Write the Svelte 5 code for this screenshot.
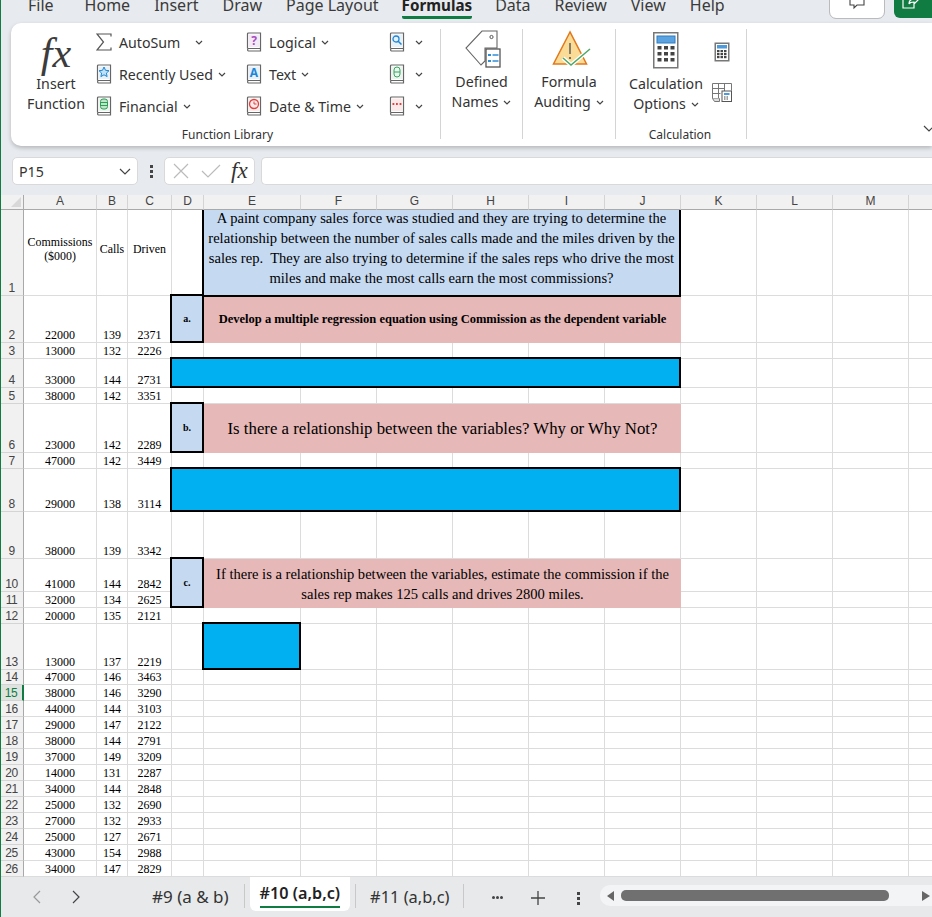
<script>
  const tabs = ['File', 'Home', 'Insert', 'Draw', 'Page Layout', 'Formulas', 'Data', 'Review', 'View', 'Help'];
  const columns = ['A', 'B', 'C', 'D', 'E', 'F', 'G', 'H', 'I', 'J', 'K', 'L', 'M', 'N'];

  const data = [
    [22000, 139, 2371], [13000, 132, 2226], [33000, 144, 2731], [38000, 142, 3351],
    [23000, 142, 2289], [47000, 142, 3449], [29000, 138, 3114], [38000, 139, 3342],
    [41000, 144, 2842], [32000, 134, 2625], [20000, 135, 2121], [13000, 137, 2219],
    [47000, 146, 3463], [38000, 146, 3290], [44000, 144, 3103], [29000, 147, 2122],
    [38000, 144, 2791], [37000, 149, 3209], [14000, 131, 2287], [34000, 144, 2848],
    [25000, 132, 2690], [27000, 132, 2933], [25000, 127, 2671], [43000, 154, 2988],
    [34000, 147, 2829]
  ];

  const blanks = (n) => Array(n).fill({ kind: 'blank' });

  // what sits in columns D onward, keyed by row number
  const merged = {
    2: [
      { kind: 'tag', text: 'a.' },
      { kind: 'pink small', span: 6, lines: ['Develop a multiple regression equation using Commission as the dependent variable'] },
      ...blanks(4)
    ],
    4: [{ kind: 'answer', span: 7 }, ...blanks(4)],
    6: [
      { kind: 'tag', text: 'b.' },
      { kind: 'pink large', span: 6, lines: ['Is there a relationship between the variables? Why or Why Not?'] },
      ...blanks(4)
    ],
    8: [{ kind: 'answer', span: 7 }, ...blanks(4)],
    10: [
      { kind: 'tag', text: 'c.', rows: 2 },
      {
        kind: 'pink medium',
        span: 6,
        rows: 2,
        lines: ['If there is a relationship between the variables, estimate the commission if the', 'sales rep makes 125 calls and drives 2800 miles.']
      },
      ...blanks(4)
    ],
    11: blanks(4),
    13: [{ kind: 'blank' }, { kind: 'answer' }, ...blanks(9)]
  };

  const intro = [
    'A paint company sales force was studied and they are trying to determine the',
    'relationship between the number of sales calls made and the miles driven by the',
    'sales rep.  They are also trying to determine if the sales reps who drive the most',
    'miles and make the most calls earn the most commissions?'
  ];

  const row = (i) => merged[i + 2] ?? blanks(11);
  const place = (c) => `grid-column: span ${c.span ?? 1}; grid-row: span ${c.rows ?? 1}`;
</script>

{#snippet chevron()}
  <svg class="chev" width="8" height="5" viewBox="0 0 8 5"><path d="M1 1l3 3 3-3" fill="none" stroke="#444" stroke-width="1.2" /></svg>
{/snippet}

{#snippet book(color)}
  <svg class="book" width="16" height="20" viewBox="0 0 16 20">
    <path d="M1.5 16.5V2a1 1 0 0 1 1-1h12v15.500H2.500a1.300 1.300 0 0 0 0 2.500h12v-2.500" fill="#fff" stroke="#666" stroke-width="1.200" />
    <rect x="3" y="2.500" width="10" height="12.500" fill={color} opacity=".12" />
  </svg>
{/snippet}

<div class="window">
  <header class="tabs">
    <nav>
      {#each tabs as t}
        <span class="tab" class:on={t === 'Formulas'}>{t}</span>
      {/each}
    </nav>
    <div class="top-actions">
      <button class="comment" aria-label="Comments">
        <svg width="16" height="12" viewBox="0 0 16 12"><path d="M1 -4h14V5H8l-3 3V5H1z" fill="none" stroke="#444" stroke-width="1.100" /></svg>
      </button>
      <button class="share" aria-label="Share">
        <svg width="18" height="16" viewBox="0 0 18 16"><path d="M2 5v8h11V9M8 9c0-3 2-5 5-5V1l4 4-4 4V7c-2 0-4 0-5 2z" fill="none" stroke="#fff" stroke-width="1.200" /></svg>
      </button>
    </div>
  </header>

  <section class="ribbon">
    <div class="group library">
      <div class="group-body">
        <div class="big insert">
          <span class="fx-big">fx</span>
          <span>Insert</span>
          <span>Function</span>
        </div>
        <div class="stack col2">
          <div class="item">
            <svg class="icon" width="16" height="18" viewBox="0 0 16 18"><path d="M15 3.500V1H1l6.500 8L1 17h14v-2.500" fill="none" stroke="#555" stroke-width="1.200" /></svg>
            <span>AutoSum</span><span class="gap"></span>{@render chevron()}
          </div>
          <div class="item">
            <span class="icon-wrap">
              {@render book('#2f8fd8')}
              <svg class="glyph" width="12" height="12" viewBox="0 0 12 12"><path d="M6 1l1.500 3.300 3.500.4-2.600 2.400.7 3.500L6 8.800 2.900 10.600l.7-3.500L1 4.700l3.500-.4z" fill="#bfe0f7" stroke="#1f86d6" /></svg>
            </span>
            <span>Recently Used</span>{@render chevron()}
          </div>
          <div class="item">
            <span class="icon-wrap">
              {@render book('#4caf6d')}
              <svg class="glyph" width="12" height="12" viewBox="0 0 12 12"><rect x="2.500" y="1" width="7" height="10" rx="2.500" fill="#bfe6c8" stroke="#2e9e57" /><path d="M2.500 4.500h7M2.500 7.500h7" stroke="#2e9e57" /></svg>
            </span>
            <span>Financial</span>{@render chevron()}
          </div>
        </div>
        <div class="stack col3">
          <div class="item">
            <span class="icon-wrap">
              {@render book('#a64fc0')}
              <span class="glyph letter purple">?</span>
            </span>
            <span>Logical</span>{@render chevron()}
          </div>
          <div class="item">
            <span class="icon-wrap">
              {@render book('#2f8fd8')}
              <span class="glyph letter blue">A</span>
            </span>
            <span>Text</span>{@render chevron()}
          </div>
          <div class="item">
            <span class="icon-wrap">
              {@render book('#e34b4b')}
              <svg class="glyph" width="12" height="12" viewBox="0 0 12 12"><circle cx="6" cy="6" r="4.500" fill="none" stroke="#e0403f" stroke-width="1.300" /><path d="M6 3.500V6h2.500" fill="none" stroke="#e0403f" /></svg>
            </span>
            <span>Date &amp; Time</span>{@render chevron()}
          </div>
        </div>
        <div class="stack col4">
          <div class="item">
            <span class="icon-wrap">
              {@render book('#2f8fd8')}
              <svg class="glyph" width="12" height="12" viewBox="0 0 12 12"><circle cx="5" cy="5" r="3" fill="none" stroke="#1f86d6" stroke-width="1.300" /><path d="M7.200 7.200L10.500 10.500" stroke="#1f86d6" stroke-width="1.500" /></svg>
            </span>
            {@render chevron()}
          </div>
          <div class="item">
            <span class="icon-wrap">
              {@render book('#4caf6d')}
              <svg class="glyph" width="12" height="12" viewBox="0 0 12 12"><rect x="3" y="1" width="6" height="10" rx="3" fill="none" stroke="#3aa564" /><path d="M3 6h6" stroke="#3aa564" /></svg>
            </span>
            {@render chevron()}
          </div>
          <div class="item">
            <span class="icon-wrap">
              {@render book('#e34b4b')}
              <svg class="glyph" width="12" height="12" viewBox="0 0 12 12"><path d="M1.500 6h1.800M5 6h1.800M8.600 6h1.800" stroke="#e0403f" stroke-width="1.800" /></svg>
            </span>
            {@render chevron()}
          </div>
        </div>
      </div>
      <div class="group-label">Function Library</div>
    </div>

    <div class="group names">
      <div class="group-body">
        <div class="big tall">
          <svg class="big-icon" width="38" height="40" viewBox="0 0 38 40">
            <path d="M32 1H17L1 18l15 17 4-4V18h12z" fill="#fff" stroke="#666" stroke-width="1.100" />
            <circle cx="26.500" cy="7" r="1.600" fill="none" stroke="#555" />
            <rect x="21" y="19" width="14" height="18" fill="#fff" stroke="#555" stroke-width="1.300" />
            <path d="M23 24h3v2h-3zM23 30h3v2h-3z" fill="#2f8fd8" />
            <path d="M27.500 25h6M27.500 31h6" stroke="#2f8fd8" stroke-width="1.400" />
          </svg>
          <span>Defined</span>
          <span class="line">Names{@render chevron()}</span>
        </div>
      </div>
    </div>

    <div class="group auditing">
      <div class="group-body">
        <div class="big tall">
          <svg class="big-icon" width="40" height="40" viewBox="0 0 40 40">
            <path d="M18 2L1.500 34h33z" fill="#fbdc97" stroke="#e2781c" stroke-width="1.500" />
            <path d="M18 13v11" stroke="#555" stroke-width="1.400" />
            <circle cx="18" cy="28" r="1.100" fill="#555" />
            <path d="M11 28l8 7L38 19" fill="none" stroke="#fff" stroke-width="4" />
            <path d="M11 28l8 7L38 19" fill="none" stroke="#4da866" stroke-width="1.500" />
          </svg>
          <span>Formula</span>
          <span class="line">Auditing{@render chevron()}</span>
        </div>
      </div>
    </div>

    <div class="group calculation">
      <div class="group-body">
        <div class="big calc">
          <svg class="big-icon" width="26" height="38" viewBox="0 0 26 38">
            <rect x=".75" y=".75" width="24" height="35" fill="#fff" stroke="#777" stroke-width="1.500" />
            <rect x="4" y="4" width="18" height="7" fill="#5ba3e0" stroke="#2f7cc0" />
            {#each [14, 20, 26] as y}
              {#each [4.500, 11, 17.500] as x}
                <rect {x} {y} width="4" height="3.500" fill="#444" />
              {/each}
            {/each}
          </svg>
          <span>Calculation</span>
          <span class="line">Options{@render chevron()}</span>
        </div>
        <div class="small-calcs">
          <svg width="16" height="20" viewBox="0 0 16 20">
            <rect x=".5" y=".5" width="15" height="19" fill="#777" />
            <rect x="2" y="2" width="12" height="16" fill="#fff" />
            <rect x="3" y="3" width="10" height="3.500" fill="#4d9ada" />
            {#each [8, 11, 14] as y}
              {#each [3, 6.500, 10] as x}
                <rect {x} {y} width="2.500" height="2.200" fill="#444" />
              {/each}
            {/each}
          </svg>
          <svg width="20" height="19" viewBox="0 0 20 19">
            <path d="M.5.500h19v7M.5.500v15h7M.5 5.500h12M.5 10.500h8M6.500.500v15M12.500.500v8" fill="none" stroke="#777" />
            <path d="M.5 15.500l2 3h5v-3" fill="#ddd" stroke="#777" />
            <rect x="10" y="8" width="9.500" height="10.500" fill="#fff" stroke="#555" />
            <rect x="12" y="10" width="5.500" height="2" fill="#4d9ada" />
            <path d="M12 14h1.500M14.500 14H16M12 16h1.500M14.500 16H16" stroke="#444" />
          </svg>
        </div>
      </div>
      <div class="group-label">Calculation</div>
    </div>

    <svg class="collapse" width="12" height="8" viewBox="0 0 12 8"><path d="M1 1l5 5 5-5" fill="none" stroke="#444" stroke-width="1.200" /></svg>
  </section>

  <section class="formula">
    <div class="namebox">
      <span>P15</span>
      <svg width="12" height="7" viewBox="0 0 12 7"><path d="M1 1l5 5 5-5" fill="none" stroke="#444" stroke-width="1.200" /></svg>
    </div>
    <div class="kebab"><i></i><i></i><i></i></div>
    <div class="fxbox">
      <svg width="16" height="16" viewBox="0 0 16 16"><path d="M1 1l14 14M15 1L1 15" stroke="#bbb" stroke-width="1.200" /></svg>
      <svg width="20" height="14" viewBox="0 0 20 14"><path d="M1 7l6 6L19 1" fill="none" stroke="#bbb" stroke-width="1.200" /></svg>
      <span class="fx-small">fx</span>
    </div>
    <div class="input"></div>
  </section>

  <section class="sheet">
    <div class="corner"><svg width="10" height="10" viewBox="0 0 10 10"><path d="M10 0v10H0z" fill="#d8d8d8" /></svg></div>
    {#each columns as c}
      <div class="colhead">{c}</div>
    {/each}

    <div class="rowhead">1</div>
    <div class="cell headcell center"><span>Commissions<br />($000)</span></div>
    <div class="cell headcell center"><span>Calls</span></div>
    <div class="cell headcell center"><span>Driven</span></div>
    <div class="cell"></div>
    <div class="intro">
      {#each intro as line}<div>{line}</div>{/each}
    </div>
    {#each blanks(4) as _}<div class="cell"></div>{/each}

    {#each data as d, i}
      <div class="rowhead" class:current={i + 2 === 15}>{i + 2}</div>
      {#each d as v}
        <div class="cell num">{v}</div>
      {/each}
      {#each row(i) as c}
        {#if c.kind === 'blank'}
          <div class="cell"></div>
        {:else if c.kind === 'tag'}
          <div class="tag" style={place(c)}>{c.text}</div>
        {:else if c.kind === 'answer'}
          <div class="answer" style={place(c)}></div>
        {:else}
          <div class={c.kind} style={place(c)}>
            {#each c.lines as line}<div>{line}</div>{/each}
          </div>
        {/if}
      {/each}
    {/each}
  </section>

  <footer class="sheetbar">
    <svg class="nav prev" width="9" height="14" viewBox="0 0 9 14"><path d="M8 1L2 7l6 6" fill="none" stroke="#999" stroke-width="1.200" /></svg>
    <svg class="nav next" width="9" height="14" viewBox="0 0 9 14"><path d="M1 1l6 6-6 6" fill="none" stroke="#444" stroke-width="1.200" /></svg>
    <span class="sheet-tab first">#9 (a &amp; b)</span>
    <i class="sep"></i>
    <span class="sheet-tab active">#10 (a,b,c)</span>
    <i class="sep"></i>
    <span class="sheet-tab last">#11 (a,b,c)</span>
    <i class="sep"></i>
    <span class="more"><i></i><i></i><i></i></span>
    <svg class="plus" width="14" height="14" viewBox="0 0 14 14"><path d="M7 0v14M0 7h14" stroke="#444" stroke-width="1.300" /></svg>
    <div class="kebab tiny"><i></i><i></i><i></i></div>
    <div class="scroll">
      <svg width="8" height="10" viewBox="0 0 8 10"><path d="M7 0v10L0 5z" fill="#666" /></svg>
      <div class="thumb"></div>
      <svg width="8" height="10" viewBox="0 0 8 10"><path d="M0 0v10l8-5z" fill="#666" /></svg>
    </div>
  </footer>
</div>

<style>
  :global(body) {
    margin: 0;
    background: #e7eaee;
  }

  .window {
    width: 931px;
    height: 917px;
    overflow: hidden;
    display: flex;
    flex-direction: column;
    border-left: 1px solid #107c41;
    background: #e7eaee;
    font-family: "Noto Sans", "Open Sans", sans-serif;
    font-size: 14.200px;
    color: #333;
  }

  .tabs {
    height: 23px;
    flex: none;
    display: flex;
    justify-content: space-between;
  }

  .tabs nav {
    display: flex;
    gap: 24px;
    padding-left: 27px;
    height: 20px;
    margin-top: -1px;
  }

  .tab {
    font-size: 16px;
    line-height: 12px;
    color: #3a3a3a;
    height: 20px;
    box-sizing: border-box;
  }

  .tab:first-child {
    margin-right: 7px;
  }

  .tab.on {
    font-size: 15.200px;
    font-weight: 700;
    color: #222;
    margin-left: -1px;
    margin-right: -1px;
    border-bottom: 3px solid #107c41;
    border-radius: 0 0 2px 2px;
  }

  .top-actions {
    display: flex;
    gap: 10px;
    margin-right: -1px;
  }

  .top-actions button {
    padding: 0;
    border: 0;
    height: 18px;
    display: flex;
    justify-content: center;
    overflow: hidden;
  }

  .comment {
    width: 54px;
    background: #fff;
    outline: 1px solid #bbb;
    border-radius: 0 0 6px 6px;
  }

  .share {
    width: 39px;
    background: #107c41;
    border-radius: 0 0 0 6px;
  }

  .share svg {
    margin-top: -5px;
    margin-right: 8px;
    flex: none;
  }

  .ribbon {
    position: relative;
    height: 123px;
    flex: none;
    margin-left: 10px;
    display: flex;
    background: #fff;
    border-radius: 10px 0 0 10px;
    box-shadow: 0 2px 4px rgba(0, 0, 0, 0.22);
  }

  .collapse {
    position: absolute;
    right: -3px;
    top: 102px;
  }

  .group {
    box-sizing: border-box;
    display: flex;
    flex-direction: column;
    height: 110px;
    margin-top: 6px;
    border-right: 1px solid #d4d4d4;
    position: relative;
  }

  .group-body {
    display: flex;
    flex: 1;
    min-height: 0;
  }

  .group-label {
    font-size: 12px;
    line-height: 16px;
    text-align: center;
    color: #333;
    margin-bottom: -4px;
  }

  .library {
    width: 430px;
  }

  .library .group-label {
    padding-left: 4px;
  }

  .names {
    width: 82px;
  }

  .auditing {
    width: 93px;
  }

  .calculation {
    width: 131px;
  }

  .calculation .group-label {
    padding-right: 2px;
  }

  .big {
    display: flex;
    flex-direction: column;
    align-items: center;
    line-height: 20px;
    white-space: nowrap;
  }

  .insert {
    width: 74px;
    margin-left: 8px;
    flex: none;
  }

  .fx-big {
    font: italic 42px/42px "Liberation Serif", serif;
    height: 42px;
    margin-top: 3px;
    color: #3c3c3c;
  }

  .tall {
    width: 100%;
  }

  .big-icon {
    display: block;
    height: 40px;
    margin: 1px 0 2px;
    flex: none;
  }

  .names .big-icon {
    margin-left: 4px;
  }

  .auditing .big-icon {
    margin-left: 6px;
  }

  .calc {
    width: 100px;
  }

  .calc .big-icon {
    height: 38px;
    margin: 3px 0 4px;
  }

  .line {
    display: flex;
    align-items: center;
    gap: 5px;
  }

  .small-calcs {
    display: flex;
    flex-direction: column;
    align-items: center;
    gap: 21px;
    padding-top: 13px;
    width: 20px;
    margin-left: -4px;
  }

  .stack {
    display: flex;
    flex-direction: column;
    flex: none;
    margin-top: -3px;
  }

  .col2 {
    width: 150px;
    margin-left: 3px;
  }

  .col3 {
    width: 143px;
  }

  .col4 {
    width: 40px;
  }

  .item {
    height: 32px;
    display: flex;
    align-items: center;
    white-space: nowrap;
    gap: 7px;
  }

  .item .chev {
    margin-left: -2px;
  }

  .col4 .item .chev {
    margin-left: 3px;
  }

  .gap {
    width: 3px;
  }

  .icon-wrap {
    position: relative;
    width: 16px;
    height: 20px;
    flex: none;
  }

  .book {
    display: block;
  }

  .glyph {
    position: absolute;
    left: 2px;
    top: 2px;
  }

  .letter {
    width: 12px;
    text-align: center;
    font-size: 12px;
    line-height: 13px;
    font-weight: 700;
  }

  .purple {
    color: #a64fc0;
  }

  .blue {
    color: #1f86d6;
  }

  .formula {
    flex: none;
    height: 28px;
    padding: 11px 0 10px 11px;
    display: flex;
    align-items: stretch;
  }

  .namebox,
  .fxbox,
  .input {
    box-sizing: border-box;
    background: #fff;
    border: 1px solid #d9d9d9;
    border-radius: 5px;
    display: flex;
    align-items: center;
  }

  .namebox {
    width: 126px;
    padding: 0 6px;
    justify-content: space-between;
  }

  .kebab {
    width: 26px;
    display: flex;
    flex-direction: column;
    align-items: center;
    justify-content: center;
    gap: 2px;
  }

  .kebab i {
    width: 3px;
    height: 3px;
    background: #444;
  }

  .fxbox {
    width: 91px;
    padding: 0 4px 0 8px;
    gap: 12px;
  }

  .fx-small {
    font: italic 23px/24px "Liberation Serif", serif;
    color: #333;
    margin-left: -2px;
  }

  .input {
    flex: 1;
    margin-left: 6px;
    border-right: 0;
    border-radius: 5px 0 0 5px;
  }

  .sheet {
    flex: none;
    height: 682px;
    display: grid;
    grid-template-columns: 23px 73px 31px 44px 32px 97px repeat(8, 76px) 76px;
    grid-template-rows: 15px 86px 47px 16px 29px 16px 49px 16px 43px 47px 33px 16px 16px 46px 15px repeat(12, 16px);
    background: #fff;
    overflow: hidden;
    font-family: "Liberation Serif", serif;
    color: #000;
  }

  .corner,
  .colhead,
  .rowhead {
    box-sizing: border-box;
    background: #f1f1f1;
    font-family: "Liberation Sans", sans-serif;
    color: #444;
    font-size: 12px;
  }

  .corner {
    border-right: 1px solid #a9a9a9;
    border-bottom: 1px solid #a9a9a9;
    display: flex;
    justify-content: flex-end;
    align-items: flex-end;
    padding: 0 2px 2px 0;
  }

  .colhead {
    border-right: 1px solid #d4d4d4;
    border-bottom: 1px solid #a9a9a9;
    text-align: center;
    line-height: 13px;
  }

  .rowhead {
    border-right: 1px solid #a9a9a9;
    border-bottom: 1px solid #d4d4d4;
    display: flex;
    align-items: flex-end;
    justify-content: center;
    line-height: 14px;
    letter-spacing: -0.5px;
    padding-right: 1px;
  }

  .rowhead.current {
    background: #dfe3e0;
    color: #107c41;
    border-right: 2px solid #107c41;
  }

  .cell {
    box-sizing: border-box;
    border-right: 1px solid #dcdcdc;
    border-bottom: 1px solid #dcdcdc;
    min-width: 0;
    white-space: nowrap;
    font-size: 12px;
  }

  .num {
    display: flex;
    align-items: flex-end;
    justify-content: center;
    line-height: 13px;
  }

  .center {
    display: flex;
    align-items: center;
    justify-content: center;
    text-align: center;
    line-height: 14px;
  }

  .headcell {
    font-size: 11.900px;
    padding-bottom: 8px;
  }

  .intro {
    grid-column: span 6;
    box-sizing: border-box;
    border: 2px solid #000;
    border-top: 0;
    margin: 0 0 -1px -2px;
    background: #c5d9f1;
    z-index: 1;
    font-size: 14.600px;
    line-height: 20px;
    text-align: center;
    white-space: pre-wrap;
    display: flex;
    flex-direction: column;
    justify-content: flex-end;
    overflow: hidden;
    padding-bottom: 7px;
  }

  .tag {
    box-sizing: border-box;
    border: 2px solid #000;
    margin: -2px 0 0 -2px;
    background: #c5d9f1;
    z-index: 1;
    font-size: 10px;
    font-weight: 700;
    display: flex;
    align-items: center;
    justify-content: center;
  }

  .answer {
    box-sizing: border-box;
    border: 2px solid #000;
    margin: -2px 0 0 -2px;
    background: #00b0f0;
    z-index: 1;
  }

  .pink {
    background: #e6b8b7;
    display: flex;
    flex-direction: column;
    justify-content: center;
    text-align: center;
    white-space: nowrap;
  }

  .small {
    font-size: 12.500px;
    font-weight: 700;
  }

  .large {
    font-size: 16.800px;
  }

  .medium {
    font-size: 14.550px;
    line-height: 20px;
  }

  .sheetbar {
    flex: 1;
    position: relative;
    display: flex;
    align-items: flex-start;
    background: #e7e9ea;
    font-size: 16.400px;
  }

  .nav {
    margin-top: 13px;
    flex: none;
  }

  .prev {
    margin-left: 31px;
  }

  .next {
    margin-left: 31px;
  }

  .sheet-tab {
    white-space: nowrap;
    margin-top: 8px;
    line-height: 24px;
    color: #333;
  }

  .first {
    margin-left: 71px;
    font-size: 17px;
  }

  .sep {
    flex: none;
    width: 1px;
    height: 24px;
    margin: 7px 0 0;
    background: #c8c8c8;
  }

  .first + .sep {
    margin-left: 15px;
  }

  .active {
    margin: 0 0 0 5px;
    padding: 3px 10px 0;
    height: 34px;
    box-sizing: border-box;
    line-height: 26px;
    background: #fff;
    border-radius: 0 0 6px 6px;
    font-weight: 600;
    color: #222;
    font-size: 16.200px;
    position: relative;
  }

  .active::after {
    content: "";
    position: absolute;
    left: 10px;
    right: 10px;
    bottom: 3px;
    height: 2px;
    background: #107c41;
  }

  .active + .sep {
    margin-left: 5px;
  }

  .last {
    margin-left: 14px;
  }

  .last + .sep {
    margin-left: 14px;
  }

  .more {
    display: flex;
    gap: 1px;
    margin: 19px 0 0 28px;
  }

  .more i {
    width: 3px;
    height: 3px;
    border-radius: 50%;
    background: #444;
  }

  .plus {
    margin: 14px 0 0 28px;
    flex: none;
  }

  .kebab.tiny {
    width: 3px;
    margin: 14px 0 0 32px;
    height: 14px;
  }

  .scroll {
    position: absolute;
    left: 599px;
    right: 0;
    top: 8px;
    height: 21px;
    background: #f3f4f5;
    border-radius: 10px 0 0 10px;
    display: flex;
    align-items: center;
    padding: 0 2px 0 7px;
    gap: 6px;
  }

  .thumb {
    width: 268px;
    height: 11px;
    background: #707070;
    border-radius: 5px;
    margin-right: auto;
  }
</style>
